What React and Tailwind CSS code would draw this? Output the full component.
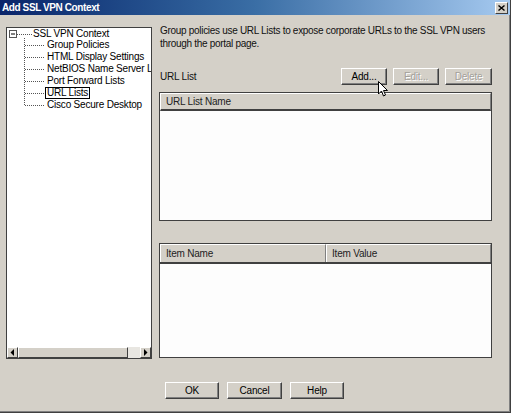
import React from 'react';

const font = { fontFamily: '"Liberation Sans", Arial, sans-serif' };

const Btn = ({ children, disabled, className = '' }) => (
    <div
        className={`h-[17px] flex items-center justify-center bg-[#d4d0c8] border border-t-white border-l-white border-r-[#404040] border-b-[#404040] shadow-[inset_-1px_-1px_0_#808080] text-[10px] tracking-[-0.2px] ${disabled ? 'text-[#a3a09a] [text-shadow:1px_1px_0_#ffffff]' : 'text-black'} ${className}`}
    >
        {children}
    </div>
);

const Header = ({ children, className = '' }) => (
    <div className={`h-[18px] flex items-center pl-[5px] bg-[#d4d0c8] border-t border-l border-t-white border-l-white border-r border-r-[#808080] text-[10px] tracking-[-0.2px] text-[#222] ${className}`}>
        {children}
    </div>
);

const treeChildren = [
    'Group Policies',
    'HTML Display Settings',
    'NetBIOS Name Server Lists',
    'Port Forward Lists',
    'URL Lists',
    'Cisco Secure Desktop',
];

const Arrow = ({ dir }) => (
    <div className="w-[11px] h-[11px] bg-[#d4d0c8] border border-t-white border-l-white border-r-[#404040] border-b-[#404040] flex items-center justify-center">
        <svg width="5" height="7" viewBox="0 0 5 7">
            {dir === 'left' ? <polygon points="4,0 4,7 0.5,3.5" fill="#000" /> : <polygon points="1,0 1,7 4.5,3.5" fill="#000" />}
        </svg>
    </div>
);

export default function App() {
    return (
        <div className="relative w-[511px] h-[413px] bg-[#d4d0c8] flex flex-col border-r border-b border-r-[#404040] border-b-[#404040] shadow-[inset_-1px_-1px_0_#808080] overflow-hidden" style={font}>
            {/* Title bar */}
            <div className="h-[15px] flex items-center justify-between pl-[2px] pr-[2px] bg-gradient-to-r from-[#0a246a] via-[#3a6ea5] to-[#a6caf0]">
                <span className="text-white font-bold text-[10px] tracking-[-0.4px]">Add SSL VPN Context</span>
                <div className="w-[13px] h-[12px] bg-[#d4d0c8] border border-t-white border-l-white border-r-[#404040] border-b-[#404040] flex items-center justify-center">
                    <svg width="7" height="6" viewBox="0 0 7 6">
                        <path d="M0.5 0.5 L6.5 5.5 M6.5 0.5 L0.5 5.5" stroke="#000" strokeWidth="1.4" />
                    </svg>
                </div>
            </div>

            <div className="flex pl-[6px] pt-[8px]">
                {/* Tree */}
                <div className="mt-[4px] w-[146px] h-[332px] border border-[#404040] bg-white flex flex-col">
                    <div className="relative flex-1 overflow-hidden">
                        <svg className="absolute left-0 top-0" width="146" height="90">
                            <rect x="2.5" y="2.5" width="7" height="7" fill="#fff" stroke="#555" />
                            <line x1="4" y1="6" x2="8" y2="6" stroke="#000" />
                            <line x1="10" y1="6.5" x2="25" y2="6.5" stroke="#555" strokeDasharray="1 1" />
                            <line x1="17.5" y1="10" x2="17.5" y2="77" stroke="#555" strokeDasharray="1 1" />
                            {[17, 29, 41, 53, 65, 77].map((y) => (
                                <line key={y} x1="18" y1={y + 0.5} x2="38" y2={y + 0.5} stroke="#555" strokeDasharray="1 1" />
                            ))}
                        </svg>
                        <div className="relative flex flex-col text-[10px] tracking-[-0.2px] text-black whitespace-nowrap">
                            <div className="h-[11px] flex items-center pl-[26px]">SSL VPN Context</div>
                            {treeChildren.map((t) => (
                                <div key={t} className="h-[12px] flex items-center pl-[38px]">
                                    <span className={`px-[1px] leading-[10px] border ${t === 'URL Lists' ? 'border-black' : 'border-transparent'}`}>{t}</span>
                                </div>
                            ))}
                        </div>
                    </div>
                    {/* Horizontal scrollbar */}
                    <div className="h-[11px] flex bg-[#e8e6e1]">
                        <Arrow dir="left" />
                        <div className="w-[110px] h-[11px] bg-[#d4d0c8] border border-t-white border-l-white border-r-[#404040] border-b-[#404040]" />
                        <div className="flex-1" />
                        <Arrow dir="right" />
                    </div>
                </div>

                {/* Right side */}
                <div className="ml-[7px] w-[333px] flex flex-col">
                    <p className="mt-[1px] text-[10px] leading-[13px] tracking-[-0.3px] text-[#111] pl-[1px] whitespace-nowrap">
                        Group policies use URL Lists to expose corporate URLs to the SSL VPN users
                        <br />
                        through the portal page.
                    </p>

                    <div className="mt-[18px] flex items-center">
                        <span className="flex-1 pl-[1px] text-[10px] tracking-[-0.2px] text-[#111]">URL List</span>
                        <div className="flex gap-[6px]">
                            <Btn className="w-[46px]">Add...</Btn>
                            <Btn disabled className="w-[46px]">Edit...</Btn>
                            <Btn disabled className="w-[47px]">Delete</Btn>
                        </div>
                    </div>

                    {/* URL list table */}
                    <div className="mt-[7px] h-[129px] border border-[#404040] bg-[#fdfdfd] flex flex-col">
                        <Header className="border-b-2 border-b-[#404040]">URL List Name</Header>
                    </div>

                    {/* Item table */}
                    <div className="mt-[22px] h-[115px] border border-[#404040] bg-[#fdfdfd] flex flex-col">
                        <div className="flex border-b-2 border-b-[#404040]">
                            <Header className="w-[166px]">Item Name</Header>
                            <Header className="flex-1">Item Value</Header>
                        </div>
                    </div>
                </div>
            </div>

            {/* Dialog buttons */}
            <div className="mt-[23px] pl-[165px] flex gap-[8px]">
                <Btn className="w-[54px]">OK</Btn>
                <Btn className="w-[55px]">Cancel</Btn>
                <Btn className="w-[54px]">Help</Btn>
            </div>

            {/* Mouse cursor */}
            <svg className="absolute left-[378px] top-[81px]" width="11" height="17" viewBox="0 0 11 17">
                <path d="M0.5 0.5 L0.5 13 L3.5 10 L5.5 15 L7.5 14 L5.5 9.5 L9.5 9.5 Z" fill="#fff" stroke="#000" strokeWidth="1" strokeLinejoin="round" />
            </svg>
        </div>
    );
}
